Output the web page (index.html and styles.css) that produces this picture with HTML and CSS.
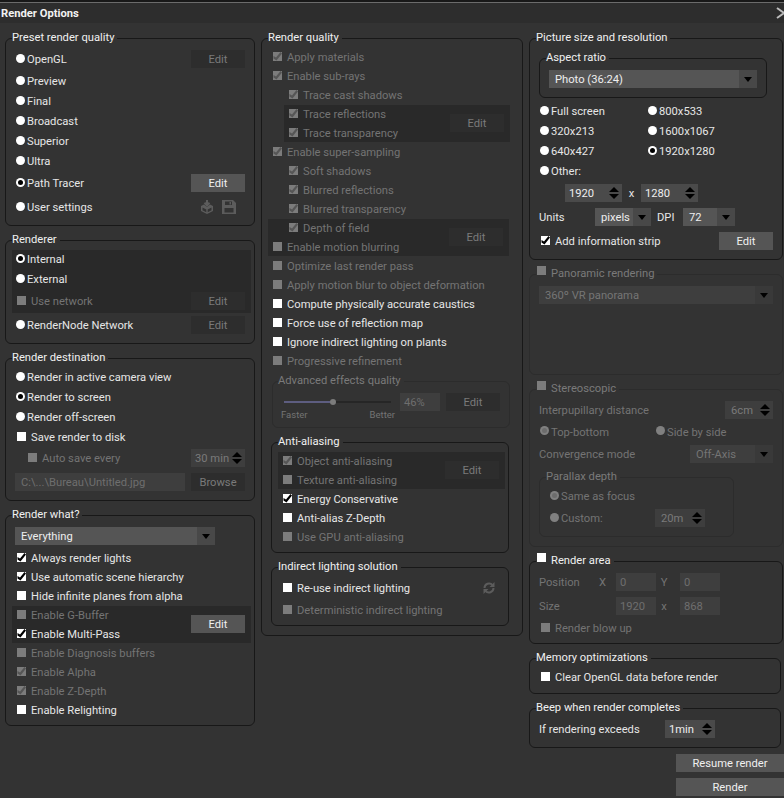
FILE: index.html
```html
<!DOCTYPE html>
<html lang="en">
<head>
<meta charset="utf-8">
<title>Render Options</title>
<link rel="stylesheet" href="styles.css">
</head>
<body>
<div class="topline"></div>
<header class="titlebar"><span class="title">Render Options</span><svg class="close" viewBox="0 0 8 12" width="8" height="12"><path d="M1 1 L8 6 L1 11" fill="none" stroke="#bdbdbd" stroke-width="2"/></svg></header>
<main class="columns">

  <div class="col col1">
    <section class="panel p-preset">
      <div class="legend">Preset render quality</div>
      <div class="row m6"><i class="radio"></i><span>OpenGL</span><b class="btn dis push">Edit</b></div>
      <div class="row m4"><i class="radio"></i><span>Preview</span></div>
      <div class="row m2"><i class="radio"></i><span>Final</span></div>
      <div class="row m2"><i class="radio"></i><span>Broadcast</span></div>
      <div class="row m2"><i class="radio"></i><span>Superior</span></div>
      <div class="row m2"><i class="radio"></i><span>Ultra</span></div>
      <div class="row m4"><i class="radio on"></i><span>Path Tracer</span><b class="btn push">Edit</b></div>
      <div class="row m6"><i class="radio"></i><span>User settings</span>
        <span class="icons push">
          <svg viewBox="0 0 14 14" width="14" height="14"><path d="M7 0v4M4.500 2.800 7 5.500l2.500-2.700" fill="none" stroke="#5c5c5c" stroke-width="2"/><path d="M4 4.500 1 6v5l6 3 6-3V6l-3-1.500-3 2.500z M2.500 7.500v2.800l3.800 1.900V9.400z M11.500 7.500 7.700 9.400v2.800l3.800-1.900z" fill="#5c5c5c" fill-rule="evenodd"/></svg>
          <svg viewBox="0 0 14 14" width="14" height="14"><path d="M0 0h11l3 3v11H0z" fill="#5c5c5c"/><path d="M3 1.500h7v3.500H3zM2.500 8h9v4.500h-9z" fill="#333"/><path d="M7.500 2h1.500v2.500H7.500z" fill="#5c5c5c"/></svg>
        </span></div>
    </section>

    <section class="panel p-renderer">
      <div class="legend">Renderer</div>
      <div class="band band-r">
        <div class="row m0"><i class="radio on"></i><span>Internal</span></div>
        <div class="row m2"><i class="radio"></i><span>External</span></div>
        <div class="row m4 off"><i class="cb"></i><span>Use network</span><b class="btn dis push">Edit</b></div>
      </div>
      <div class="row m3"><i class="radio"></i><span>RenderNode Network</span><b class="btn dis push">Edit</b></div>
    </section>

    <section class="panel p-dest">
      <div class="legend">Render destination</div>
      <div class="row m4"><i class="radio"></i><span>Render in active camera view</span></div>
      <div class="row m2"><i class="radio on"></i><span>Render to screen</span></div>
      <div class="row m2"><i class="radio"></i><span>Render off-screen</span></div>
      <div class="row m2"><i class="cb"></i><span>Save render to disk</span></div>
      <div class="row m3 off lv1"><i class="cb"></i><span>Auto save every</span><b class="spin dim w54 push">30 min<i class="arrows"></i></b></div>
      <div class="row m6 off"><b class="field dim w170">C:\...\Bureau\Untitled.jpg</b><b class="btn dis push">Browse</b></div>
    </section>

    <section class="panel p-what">
      <div class="legend">Render what?</div>
      <div class="row m6"><b class="select w200">Everything<i class="drop"></i></b></div>
      <div class="row m4"><i class="cb on"></i><span>Always render lights</span></div>
      <div class="row"><i class="cb on"></i><span>Use automatic scene hierarchy</span></div>
      <div class="row"><i class="cb"></i><span>Hide infinite planes from alpha</span></div>
      <div class="band band-w">
        <div class="band-rows">
          <div class="row m0 off"><i class="cb"></i><span>Enable G-Buffer</span></div>
          <div class="row"><i class="cb on"></i><span>Enable Multi-Pass</span></div>
        </div>
        <b class="btn push">Edit</b>
      </div>
      <div class="row off"><i class="cb"></i><span>Enable Diagnosis buffers</span></div>
      <div class="row off"><i class="cb on"></i><span>Enable Alpha</span></div>
      <div class="row off"><i class="cb on"></i><span>Enable Z-Depth</span></div>
      <div class="row"><i class="cb"></i><span>Enable Relighting</span></div>
    </section>
  </div>

  <div class="col col2">
    <section class="panel p-quality">
      <div class="legend">Render quality</div>
      <div class="row m4 off"><i class="cb on"></i><span>Apply materials</span></div>
      <div class="row off"><i class="cb on"></i><span>Enable sub-rays</span></div>
      <div class="row off lv2"><i class="cb on"></i><span>Trace cast shadows</span></div>
      <div class="band band-q1">
        <div class="band-rows">
          <div class="row m0 off lv2b"><i class="cb on"></i><span>Trace reflections</span></div>
          <div class="row off lv2b"><i class="cb on"></i><span>Trace transparency</span></div>
        </div>
        <b class="btn dis push">Edit</b>
      </div>
      <div class="row off"><i class="cb on"></i><span>Enable super-sampling</span></div>
      <div class="row off lv2"><i class="cb on"></i><span>Soft shadows</span></div>
      <div class="row off lv2"><i class="cb on"></i><span>Blurred reflections</span></div>
      <div class="row off lv2"><i class="cb on"></i><span>Blurred transparency</span></div>
      <div class="band band-q2">
        <div class="band-rows">
          <div class="row m0 off lv2"><i class="cb on"></i><span>Depth of field</span></div>
          <div class="row off"><i class="cb"></i><span>Enable motion blurring</span></div>
        </div>
        <b class="btn dis push">Edit</b>
      </div>
      <div class="row off"><i class="cb"></i><span>Optimize last render pass</span></div>
      <div class="row off"><i class="cb"></i><span>Apply motion blur to object deformation</span></div>
      <div class="row"><i class="cb"></i><span>Compute physically accurate caustics</span></div>
      <div class="row"><i class="cb"></i><span>Force use of reflection map</span></div>
      <div class="row"><i class="cb"></i><span>Ignore indirect lighting on plants</span></div>
      <div class="row off"><i class="cb"></i><span>Progressive refinement</span></div>

      <section class="panel faint p-adv">
        <div class="legend off">Advanced effects quality</div>
        <div class="adv off">
          <div class="slider">
            <div class="track"><div class="fill"></div><i class="knob"></i></div>
            <div class="ends"><span>Faster</span><span>Better</span></div>
          </div>
          <b class="field dim w40">46%</b>
          <b class="btn dis">Edit</b>
        </div>
      </section>

      <section class="panel p-aa">
        <div class="legend">Anti-aliasing</div>
        <div class="band band-a">
          <div class="band-rows">
            <div class="row m0 off"><i class="cb on"></i><span>Object anti-aliasing</span></div>
            <div class="row off"><i class="cb"></i><span>Texture anti-aliasing</span></div>
          </div>
          <b class="btn dis push">Edit</b>
        </div>
        <div class="row"><i class="cb on"></i><span>Energy Conservative</span></div>
        <div class="row"><i class="cb"></i><span>Anti-alias Z-Depth</span></div>
        <div class="row off"><i class="cb"></i><span>Use GPU anti-aliasing</span></div>
      </section>

      <section class="panel p-ind">
        <div class="legend">Indirect lighting solution</div>
        <div class="row m6"><i class="cb"></i><span>Re-use indirect lighting</span>
          <svg class="refresh push" viewBox="0 0 12 12" width="12" height="12"><path d="M1.500 6a4.500 4.500 0 0 1 8-2.800M10.500 6a4.500 4.500 0 0 1-8 2.800" fill="none" stroke="#5c5c5c" stroke-width="2"/><path d="M11.500 0v5h-5zM.5 12V7h5z" fill="#5c5c5c"/></svg>
        </div>
        <div class="row m4 off"><i class="cb"></i><span>Deterministic indirect lighting</span></div>
      </section>
    </section>
  </div>

  <div class="col col3">
    <section class="panel p-size">
      <div class="legend">Picture size and resolution</div>
      <section class="panel p-aspect">
        <div class="legend">Aspect ratio</div>
        <div class="row m6"><b class="select w208">Photo (36:24)<i class="drop"></i></b></div>
      </section>
      <div class="sizes">
        <div class="row m0"><i class="radio"></i><span>Full screen</span></div>
        <div class="row m0"><i class="radio"></i><span>800x533</span></div>
        <div class="row m0"><i class="radio"></i><span>320x213</span></div>
        <div class="row m0"><i class="radio"></i><span>1600x1067</span></div>
        <div class="row m0"><i class="radio"></i><span>640x427</span></div>
        <div class="row m0"><i class="radio on"></i><span>1920x1280</span></div>
        <div class="row m0"><i class="radio"></i><span>Other:</span></div>
      </div>
      <div class="row m4 dims">
        <b class="spin w57">1920<i class="arrows"></i></b><span class="times">x</span><b class="spin w57">1280<i class="arrows"></i></b>
      </div>
      <div class="row m6">
        <span class="lbl w56">Units</span><b class="select w56">pixels<i class="drop"></i></b>
        <span class="dpi">DPI</span><b class="select w52">72<i class="drop"></i></b>
      </div>
      <div class="row m6"><i class="cb on"></i><span>Add information strip</span><b class="btn push">Edit</b></div>
    </section>

    <section class="panel faint p-pano off">
      <div class="legend"><i class="cb"></i><span>Panoramic rendering</span></div>
      <div class="row m6"><b class="select dim w234">360º VR panorama<i class="drop"></i></b></div>
    </section>

    <section class="panel faint p-stereo off">
      <div class="legend"><i class="cb"></i><span>Stereoscopic</span></div>
      <div class="row m6"><span class="lbl">Interpupillary distance</span><b class="spin dim w48 push pad6">6cm<i class="arrows"></i></b></div>
      <div class="row m4 split"><span class="opt"><i class="radio on"></i><span>Top-bottom</span></span><span class="opt"><i class="radio"></i><span>Side by side</span></span></div>
      <div class="row m4"><span class="lbl">Convergence mode</span><b class="select dim w83 push">Off-Axis<i class="drop"></i></b></div>
      <section class="panel faint p-parallax">
        <div class="legend">Parallax depth</div>
        <div class="row m4"><i class="radio on"></i><span>Same as focus</span></div>
        <div class="row m4"><i class="radio"></i><span>Custom:</span><b class="spin dim w50 push pad6">20m<i class="arrows"></i></b></div>
      </section>
    </section>

    <section class="panel p-area">
      <div class="legend"><i class="cb"></i><span>Render area</span></div>
      <div class="area off">
        <div class="row m6"><span class="lbl w60">Position</span><span class="axis">X</span><b class="field dim w40">0</b><span class="axis2">Y</span><b class="field dim w40">0</b></div>
        <div class="row m6"><span class="lbl w60">Size</span><span class="axis"></span><b class="field dim w40">1920</b><span class="axis2">x</span><b class="field dim w40">868</b></div>
        <div class="row m4"><i class="cb"></i><span>Render blow up</span></div>
      </div>
    </section>

    <section class="panel p-mem">
      <div class="legend">Memory optimizations</div>
      <div class="row m4"><i class="cb"></i><span>Clear OpenGL data before render</span></div>
    </section>

    <section class="panel p-beep">
      <div class="legend">Beep when render completes</div>
      <div class="row m6"><span class="lbl w126">If rendering exceeds</span><b class="spin w50">1min<i class="arrows"></i></b></div>
    </section>

    <b class="btn wide">Resume render</b>
    <b class="btn wide">Render</b>
  </div>
</main>
</body>
</html>
```
FILE: styles.css
```css
*{box-sizing:border-box}
html,body{margin:0;height:100%}
body{background:#333;color:#e6e6e6;font:11.2px/18px Roboto,"Liberation Sans",sans-serif;overflow:hidden;width:784px;height:798px}
b,i{font-style:normal;font-weight:400}
.topline{height:3px;background:linear-gradient(#181818 0 2px,#6b6b6b 2px)}
.titlebar{height:20px;background:#2d2d2d;display:flex;align-items:center;justify-content:space-between;padding-left:1px}
.title{font-weight:700;color:#f2f2f2;padding-top:2px}
.columns{display:flex;padding:15px 0 0 5px}
.col{display:flex;flex-direction:column}
.col1{width:250px}
.col2{width:262px;margin-left:6px}
.col3{width:255px;margin-left:6px;align-items:flex-start}

.panel{border:1px solid #181818;border-radius:6px;padding:0 9px;margin-top:14px;width:100%}
.col>.panel:first-child{margin-top:0}
.faint{border-color:#2c2c2c}
.legend{display:flex;align-items:center;width:fit-content;height:14px;line-height:14px;margin:-9px 0 0 -3px;padding:2px 3px 0 0;background:#333;color:#f0f0f0}
.legend .cb{margin:-2px 5px 0 1px}
.legend.off,.off .legend{color:#7a7a7a}

.row{display:flex;align-items:center;height:18px;margin-top:1px;white-space:nowrap}
.row>span,.opt>span{padding-top:2px}
.row>.opt,.row>.icons{padding-top:0}
.m0{margin-top:0}.m2{margin-top:2px}.m3{margin-top:3px}.m4{margin-top:4px}.m6{margin-top:6px}
.off{color:#747474}
.push{margin-left:auto}

.radio{flex:none;align-self:flex-start;position:relative;width:9px;height:9px;border-radius:50%;background:#fff;margin:4px 2px 0 1px}
.radio.on::after{content:"";position:absolute;inset:2px;border-radius:50%;background:#000}
.off .radio{background:#808080}
.off .radio.on::after{background:#6c6c6c}

.cb{flex:none;align-self:flex-start;position:relative;width:9px;height:9px;background:#fff;margin:4px 5px 0 2px}
.cb.on::after{content:"";position:absolute;inset:0;background:#000;clip-path:polygon(0.5px 4px,3px 5.5px,7.5px 0,9px 1.500px,3.500px 8.500px,0.5px 6.500px)}
.off .cb{background:#7c7c7c}
.off .cb.on::after{background:#565656}
.lv1{padding-left:11px}
.lv2{padding-left:16px}
.lv2b{padding-left:3px}

.btn{display:flex;align-items:center;justify-content:center;flex:none;width:54px;height:18px;padding-top:2px;background:#555;color:#f0f0f0}
.btn.dis{background:#2d2d2d;color:#7a7a7a}
.wide{width:108px;margin:6px 0 0 147px}

.band{background:#292929}
.band-rows{flex:1}
.band>.btn{align-self:flex-start;margin-top:9px}
.band-r{margin:4px -6px 0 -3px;padding:0 6px 0 3px;height:63px}
.band-w,.band-q1,.band-q2,.band-a{display:flex;margin-top:1px}
.band-w{margin-left:-3px;margin-right:-6px;padding:0 6px 0 3px}
.band-q1{margin-left:13px;width:226px;padding-right:6px}
.band-q2{margin-left:-3px;width:241px;padding:0 6px 0 3px}
.band-a{margin:4px 0 0 -3px;width:227px;padding:0 6px 0 3px}

.select{display:flex;align-items:center;position:relative;height:18px;flex:none;padding:2px 0 0 6px;background:#555;color:#eee}
.select.dim{background:#3e3e3e;color:#757575}
.drop{position:absolute;right:0;top:0;width:18px;height:18px;background:#484848}
.dim .drop{background:#393939}
.drop::after{content:"";position:absolute;left:5px;top:7px;border:solid transparent;border-width:5px 4px 0;border-top-color:#000}

.spin{display:flex;align-items:center;position:relative;height:18px;flex:none;padding:2px 0 0 4px;background:#4a4a4a;color:#eee}
.spin.dim{background:#3e3e3e;color:#7a7a7a}
.spin.pad6{padding-left:6px}
.arrows{position:absolute;right:1px;top:0;width:14px;height:18px}
.arrows::before,.arrows::after{content:"";position:absolute;left:2px;border:solid transparent;border-width:0 5px}
.arrows::before{top:3px;border-bottom:5px solid #000}
.arrows::after{bottom:3px;border-top:5px solid #000}

.field{display:flex;align-items:center;flex:none;height:18px;padding:2px 0 0 4px;background:#4a4a4a}
.field.dim{background:#3e3e3e;color:#6e6e6e}
.p-dest .field{padding-left:6px}

.w40{width:40px}.w48{width:48px}.w50{width:50px}.w52{width:52px}.w54{width:54px}.w56{width:56px}.w57{width:57px}
.w60{width:60px}.w83{width:83px}.w126{width:126px}.w170{width:170px}.w200{width:200px}.w208{width:208px}.w234{width:234px}
.lbl{flex:none}

.icons{display:flex;gap:8px;margin-right:9px}
.refresh{margin-right:4px}

.p-preset{height:188px}
.p-renderer{height:104px}
.p-dest{height:143px}
.p-what{height:211px}
.p-quality{height:598px}
.p-adv{height:47px;margin:11px 0 0 1px;width:238px}
.p-adv>.legend{margin-left:-4px}
.adv{display:flex;margin-top:6px}
.slider{width:115px;margin-left:-1px;margin-right:5px}
.track{position:relative;height:2px;margin:8px 4px 0 3px;background:#262626}
.fill{width:49px;height:2px;background:#5d5d80}
.knob{position:absolute;left:46px;top:-2px;width:6px;height:6px;border-radius:50%;background:#7c7c7c}
.ends{display:flex;justify-content:space-between;font-size:9.5px;line-height:12px;margin-top:6px}
.adv .btn{margin-left:6px}
.p-aa{height:111px;margin:14px 0 0;width:238px}
.p-ind{height:59px;margin:14px 0 0;width:238px}

.col3>.panel{width:254px}
.p-size{height:222px}
.col3 .p-aspect{width:228px;height:40px;margin-top:14px}
.sizes{display:grid;grid-template-columns:108px 1fr;grid-auto-rows:18px;row-gap:2px;margin-top:4px}
.dims{padding-left:26px}
.times{width:19px;text-align:center}
.dpi{margin-left:6px;width:26px}
.p-pano{height:101px}
.p-stereo{height:158px}
.split .opt{display:flex;align-items:center;width:116px}
.col3 .p-parallax{width:195px;height:60px;margin-top:14px}
.p-parallax .spin{margin-right:19px}
.p-area{height:83px}
.axis{width:17px;flex:none}
.axis2{width:24px;flex:none;text-align:center;padding-right:8px}
.col3>.p-mem{height:36px;width:252px}
.col3>.p-beep{height:40px;width:252px}
```
